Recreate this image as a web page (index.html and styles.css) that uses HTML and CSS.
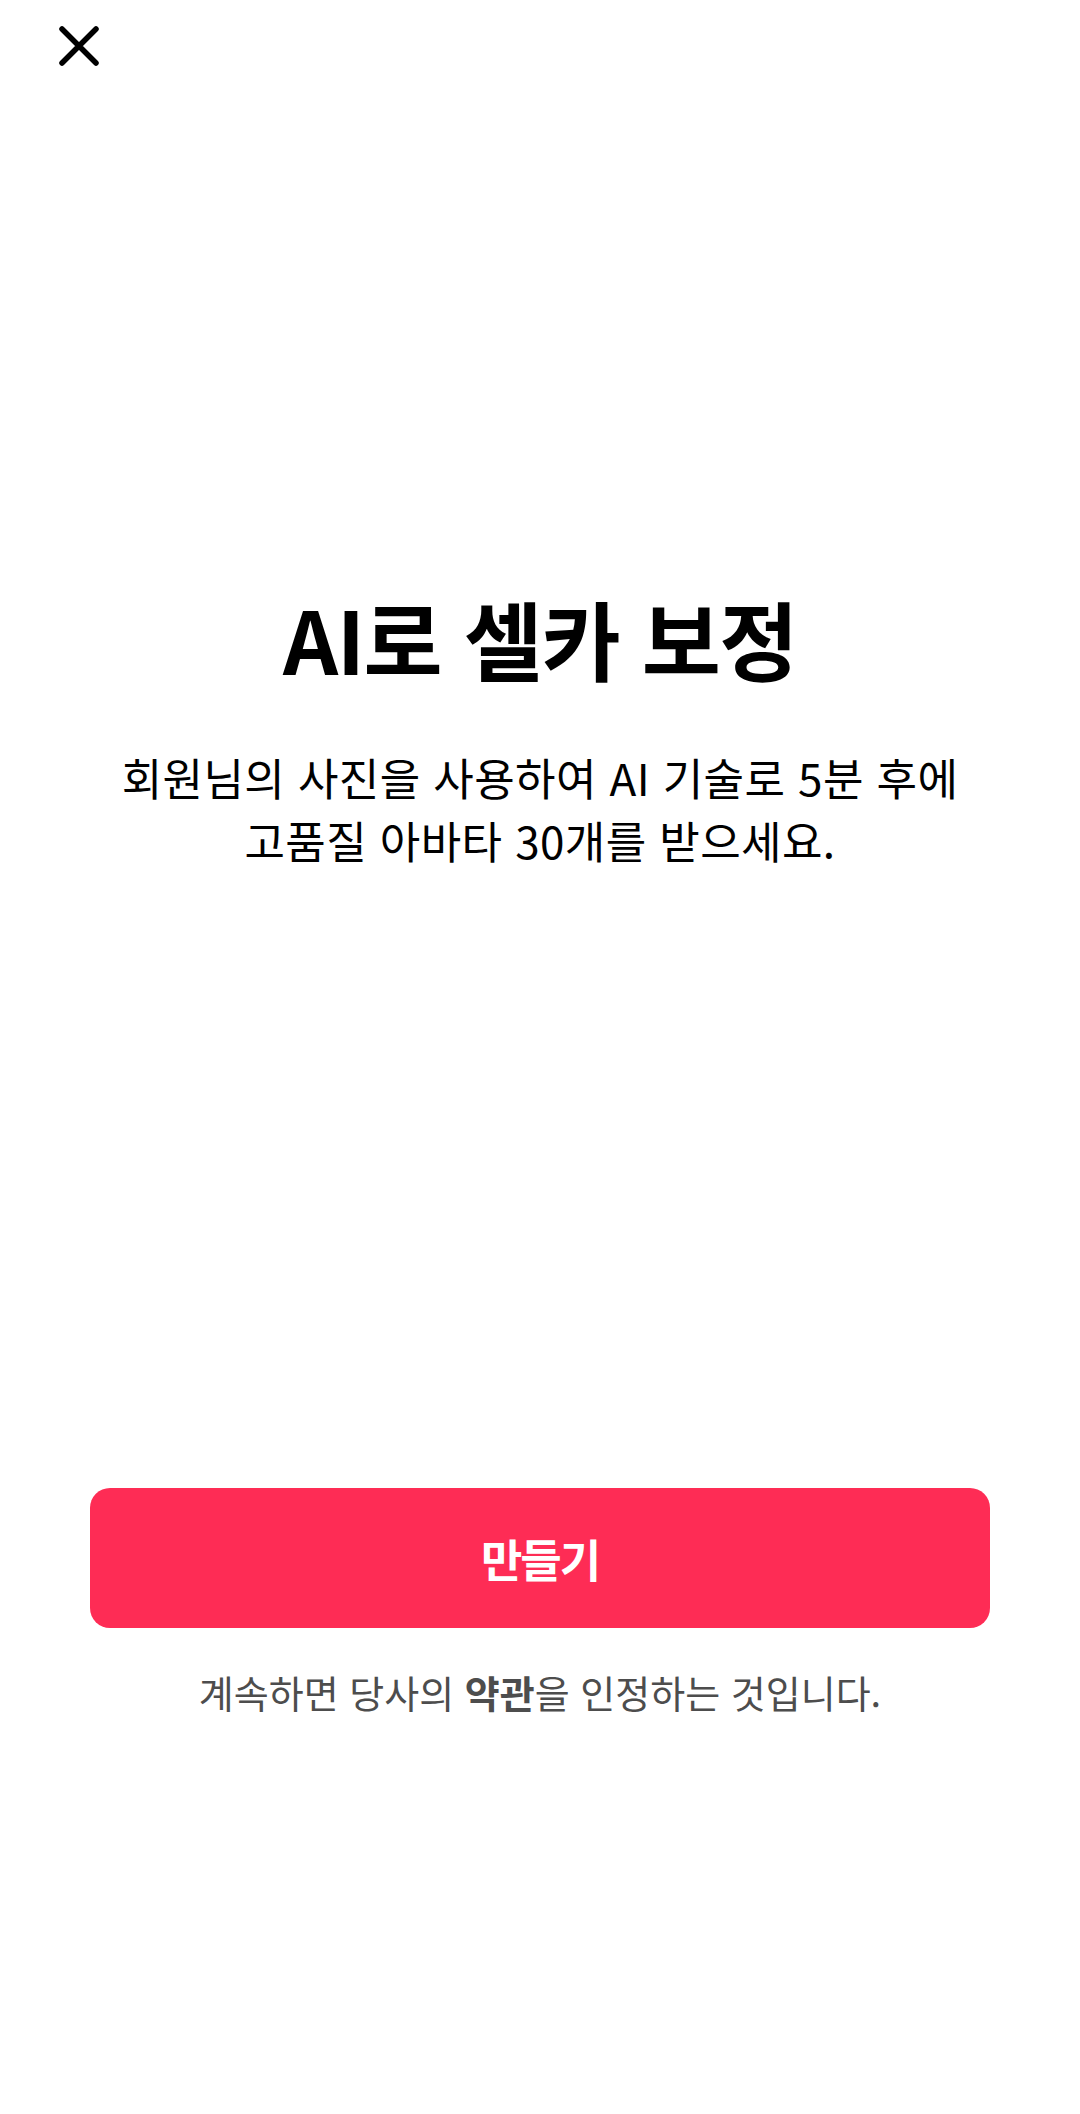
FILE: index.html
```html
<!DOCTYPE html>
<html lang="ko">
<head>
    <meta charset="UTF-8">
    <meta name="viewport" content="width=device-width, initial-scale=1.0">
    <title>AI로 셀카 보정</title>
    <link rel="stylesheet" href="styles.css">
</head>
<body>
    <div class="topbar">
        <button class="close-btn" type="button" aria-label="닫기">
            <svg width="40" height="40" viewBox="0 0 40 40">
                <path d="M3 3 L37 37 M37 3 L3 37" stroke="#000" stroke-width="5.5" stroke-linecap="round" fill="none"/>
            </svg>
        </button>
    </div>

    <div class="intro">
        <h1 class="title">AI로 셀카 보정</h1>
        <p class="subtitle">회원님의 사진을 사용하여 AI 기술로 5분 후에<br>고품질 아바타 30개를 받으세요.</p>
    </div>

    <div class="actions">
        <button class="create-btn" type="button">만들기</button>
        <p class="terms">계속하면 당사의 <b>약관</b>을 인정하는 것입니다.</p>
    </div>
</body>
</html>
```

FILE: styles.css
```css
body {
    margin: 0;
    width: 1080px;
    height: 2114px;
    background-color: #ffffff;
    font-family: "Noto Sans CJK KR", "Noto Sans", sans-serif;
    color: #000;
}
.topbar {
    height: 92px;
    padding-left: 59px;
    padding-top: 26px;
    box-sizing: border-box;
}
.close-btn {
    display: block;
    width: 40px;
    height: 40px;
    padding: 0;
    border: none;
    background: none;
    cursor: pointer;
}
.close-btn svg {
    display: block;
}
.intro {
    margin-top: 494px;
    text-align: center;
}
.title {
    margin: 0;
    font-size: 86px;
    line-height: 104px;
    font-weight: 700;
    letter-spacing: -1.5px;
}
.subtitle {
    margin: 56px 0 0;
    font-size: 44px;
    line-height: 63px;
    font-weight: 400;
    letter-spacing: 0.4px;
}
.actions {
    margin-top: 616px;
    padding: 0 90px;
    text-align: center;
}
.create-btn {
    display: block;
    width: 100%;
    height: 140px;
    border: none;
    border-radius: 20px;
    background-color: #fe2c55;
    color: #fff;
    font-family: inherit;
    font-size: 45px;
    font-weight: 700;
    letter-spacing: -2px;
    cursor: pointer;
}
.terms {
    margin: 38px 0 0;
    font-size: 38px;
    line-height: 52px;
    color: #4d4d4d;
}
.terms b {
    font-weight: 700;
}
```
